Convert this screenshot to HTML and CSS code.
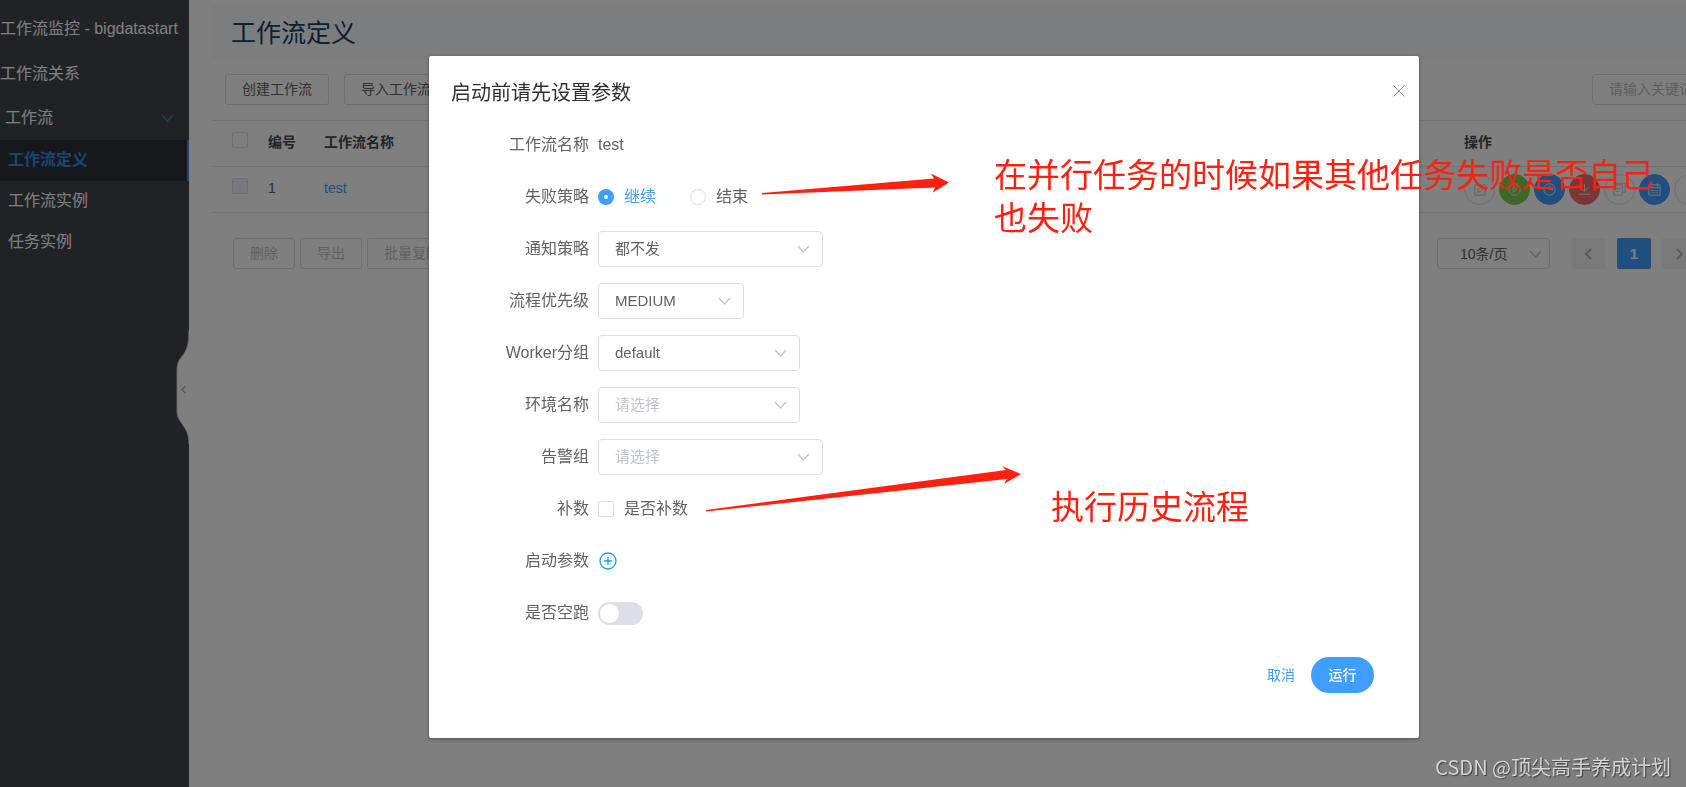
FILE: index.html
```html
<!DOCTYPE html>
<html lang="zh-CN">
<head>
<meta charset="utf-8">
<title>工作流定义</title>
<link rel="stylesheet" href="styles.css">
</head>
<body>
<svg class="defs" aria-hidden="true">
  <symbol id="chevron" viewBox="0 0 14 14"><path d="M1 4l5.500 6 5.500-6" fill="none" stroke="currentColor" stroke-width="1.3"/></symbol>
</svg>
<div class="page">
  <nav class="sidebar">
    <a class="nav-item nav-top" href="#">工作流监控 - bigdatastart</a>
    <a class="nav-item nav-top" href="#">工作流关系</a>
    <button class="nav-item nav-group" type="button">工作流<svg class="nav-chevron"><use href="#chevron"/></svg></button>
    <a class="nav-item nav-sub active" href="#">工作流定义</a>
    <a class="nav-item nav-sub" href="#">工作流实例</a>
    <a class="nav-item nav-sub" href="#">任务实例</a>
    <button class="collapse" type="button" aria-label="收起菜单">
      <svg viewBox="0 0 13 116"><path d="M13 1C13 32 1 23 1 42V82C1 95 13 96 13 115Z" fill="#fff"/><path d="M13 1C13 32 1 23 1 42V82C1 95 13 96 13 115" fill="none" stroke="#c6cad3"/><path d="M9.500 57L6 60.500L9.500 64" fill="none" stroke="#a6abc0" stroke-width="1.300"/></svg>
    </button>
  </nav>
  <main class="main">
    <div class="content">
      <h1 class="page-title">工作流定义</h1>
      <div class="toolbar">
        <button class="btn" type="button">创建工作流</button>
        <button class="btn" type="button">导入工作流</button>
        <input class="search" type="text" placeholder="请输入关键词" aria-label="关键词">
      </div>
      <table class="grid">
        <colgroup><col class="c-check"><col class="c-id"><col><col class="c-ops"></colgroup>
        <thead>
          <tr><th><input class="check" type="checkbox" aria-label="全选"></th><th>编号</th><th>工作流名称</th><th>操作</th></tr>
        </thead>
        <tbody>
          <tr>
            <td><input class="check" type="checkbox" disabled aria-label="选择 test"></td><td>1</td><td><a class="link" href="#">test</a></td>
            <td class="ops-cell">
              <div class="ops">
                <button class="op" type="button" aria-label="编辑"><svg viewBox="0 0 16 16"><path d="M10 3H3v11h11V7M6 11l1-3 6-6 2 2-6 6z"/></svg></button>
                <button class="op green" type="button" aria-label="运行"><svg viewBox="0 0 16 16"><circle cx="8" cy="8" r="6"/><path d="M6.500 5v6l4-3z"/></svg></button>
                <button class="op blue" type="button" aria-label="定时"><svg viewBox="0 0 16 16"><circle cx="8" cy="8" r="6"/><path d="M8 4v4h4"/></svg></button>
                <button class="op red" type="button" aria-label="下线"><svg viewBox="0 0 16 16"><path d="M8 2v8M4 6l4 4 4-4M2 13h12"/></svg></button>
                <button class="op" type="button" aria-label="复制"><svg viewBox="0 0 16 16"><path d="M2 3h9v11H2zM5 3V1.500h9V11h-3M4 7h5M4 10h4"/></svg></button>
                <button class="op blue" type="button" aria-label="定时管理"><svg viewBox="0 0 16 16"><path d="M2 3h12v11H2zM2 6h12M5 1v4M11 1v4M4 9h2M7 9h2M10 9h2M4 11.500h2M7 11.500h2M10 11.500h2"/></svg></button>
                <button class="op" type="button" aria-label="删除"><svg viewBox="0 0 16 16"><path d="M3 4h10M5 4v10h6V4"/></svg></button>
              </div>
            </td>
          </tr>
        </tbody>
      </table>
      <div class="bottom">
        <button class="btn" type="button" disabled>删除</button>
        <button class="btn" type="button" disabled>导出</button>
        <button class="btn" type="button" disabled>批量复制</button>
        <div class="pager">
          <span class="select-box page-size"><select aria-label="每页条数"><option>10条/页</option></select><svg><use href="#chevron"/></svg></span>
          <button class="page-btn" type="button" aria-label="上一页"><svg viewBox="0 0 14 14"><path d="M9 2L4 7l5 5"/></svg></button>
          <button class="page-btn current" type="button">1</button>
          <button class="page-btn" type="button" aria-label="下一页"><svg viewBox="0 0 14 14"><path d="M5 2l5 5-5 5"/></svg></button>
        </div>
      </div>
    </div>
  </main>
</div>

<div class="overlay">
  <section class="dialog" role="dialog" aria-labelledby="dialog-title">
    <header class="dialog-head">
      <h2 class="dialog-title" id="dialog-title">启动前请先设置参数</h2>
      <button class="close" type="button" aria-label="关闭"><svg viewBox="0 0 12 12"><path d="M.500 .500l11 11M11.500 .500l-11 11"/></svg></button>
    </header>
    <form class="form">
      <div class="row"><span class="label">工作流名称</span><span>test</span></div>
      <div class="row"><span class="label">失败策略</span>
        <label class="choice chosen"><input class="radio" type="radio" name="fail" checked>继续</label>
        <label class="choice"><input class="radio" type="radio" name="fail">结束</label>
      </div>
      <div class="row"><label class="label" for="notify">通知策略</label><span class="select-box wide"><select id="notify"><option>都不发</option></select><svg><use href="#chevron"/></svg></span></div>
      <div class="row"><label class="label" for="priority">流程优先级</label><span class="select-box narrow"><select id="priority"><option>MEDIUM</option></select><svg><use href="#chevron"/></svg></span></div>
      <div class="row"><label class="label" for="worker">Worker分组</label><span class="select-box medium"><select id="worker"><option>default</option></select><svg><use href="#chevron"/></svg></span></div>
      <div class="row"><label class="label" for="env">环境名称</label><span class="select-box medium"><select class="empty" id="env"><option>请选择</option></select><svg><use href="#chevron"/></svg></span></div>
      <div class="row"><label class="label" for="alarm">告警组</label><span class="select-box wide"><select class="empty" id="alarm"><option>请选择</option></select><svg><use href="#chevron"/></svg></span></div>
      <div class="row"><span class="label">补数</span><label class="choice"><input class="check" type="checkbox">是否补数</label></div>
      <div class="row"><span class="label">启动参数</span><button class="add" type="button" aria-label="添加参数"><svg viewBox="0 0 20 20"><circle cx="10" cy="10" r="8"/><path d="M6 10h8M10 6v8"/></svg></button></div>
      <div class="row"><label class="label" for="dry">是否空跑</label><input class="switch" id="dry" type="checkbox" role="switch"></div>
    </form>
    <footer class="dialog-foot">
      <button class="text-btn" type="button">取消</button>
      <button class="run" type="button">运行</button>
    </footer>
    <svg class="arrows" viewBox="0 0 620 500" aria-hidden="true">
      <path d="M333 137L505 122.500L502 117.500L520 126.500L504 136.500L506 131.500L333 138.500Z"/>
      <path d="M277 454L577 414L573 410L592 418L575 428L578 423L277 455.500Z"/>
    </svg>
    <p class="note note-fail">在并行任务的时候如果其他任务失败是否自己也失败</p>
    <p class="note note-history">执行历史流程</p>
  </section>
</div>
<div class="watermark">CSDN @顶尖高手养成计划</div>
</body>
</html>
```
FILE: styles.css
```css
* { box-sizing: border-box; }

body {
  margin: 0;
  overflow: hidden;
  font-family: "Liberation Sans", "Noto Sans CJK SC", sans-serif;
  font-size: 14px;
  line-height: 20px;
  color: #606266;
}

button, input, select { font: inherit; color: inherit; margin: 0; }
button { padding: 0; border: 0; background: none; }
a { text-decoration: none; }
h1, h2, p { margin: 0; font-weight: 400; }
.defs { position: absolute; width: 0; height: 0; }

.page { display: flex; height: 100vh; background: #fff; }

/* Sidebar */
.sidebar {
  position: relative;
  flex: none;
  width: 189px;
  padding-top: 6px;
  background: #43454b;
  font-size: 16px;
}
.nav-item {
  display: flex;
  align-items: center;
  width: 100%;
  height: 45px;
  color: #fff;
  white-space: nowrap;
}
.nav-group { height: 44px; padding: 0 14px 0 5px; justify-content: space-between; }
.nav-chevron { width: 14px; height: 14px; color: #2f7fd0; }
.nav-sub { height: 41px; padding: 0 0 2px 8px; }
.nav-sub.active { background: #2e3038; color: #348be6; font-weight: 700; border-right: 2px solid #348be6; }
.collapse { position: absolute; right: 0; top: 329px; width: 13px; height: 116px; }
.collapse svg { display: block; width: 13px; height: 116px; }

/* List page; it continues past the right edge of the window */
.main { flex: 1; min-width: 0; overflow: hidden; padding: 5px 0 0 23px; }
.content { width: calc(100% + 40px); }
.page-title {
  padding: 2px 19px 0;
  line-height: 52px;
  font-size: 25px;
  color: #1f3d5c;
  background: #f8fafd;
}
.toolbar { display: flex; gap: 15px; padding: 15px 0 15px 13px; }
.btn {
  height: 31px;
  padding: 0 16px 2px;
  border: 1px solid #dcdfe6;
  border-radius: 3px;
  background: #fff;
  white-space: nowrap;
}
.btn:disabled { color: #c0c4cc; }
.search {
  width: 134px;
  height: 31px;
  margin-left: auto;
  padding: 0 16px 2px;
  border: 1px solid #dcdfe6;
  border-radius: 4px;
}
.search::placeholder { color: #b8bbc2; }

.grid { width: 100%; table-layout: fixed; border-collapse: collapse; border-top: 1px solid #e4e7f2; }
.grid tr { height: 46px; border-bottom: 1px solid #e4e7f2; }
.grid th, .grid td { padding: 0 10px 3px; text-align: left; }
.grid .ops-cell { padding-bottom: 0; }
.grid th { color: #46494f; font-weight: 700; }
.grid .check { display: block; margin: 0 10px 4px; }
.c-check { width: 46px; }
.c-id { width: 56px; }
.c-ops { width: 272px; }
.link { color: #409eff; }
.ops { display: flex; gap: 4px; }
.op {
  display: grid;
  place-items: center;
  width: 31px;
  height: 31px;
  flex: none;
  border: 1px solid #dcdfe6;
  border-radius: 50%;
  color: #c0c4cc;
}
.op svg { width: 15px; height: 15px; fill: none; stroke: currentColor; }
.op.green { background: #82ce50; border-color: #82ce50; color: #e4f4da; }
.op.blue { background: #409eff; border-color: #409eff; color: #e4f1ff; }
.op.red { background: #f56c6c; border-color: #f56c6c; color: #fde8e8; }

.bottom { display: flex; gap: 5px; padding: 25px 30px 0 21px; }
.pager { display: flex; gap: 11px; margin-left: auto; }
.page-size { width: 113px; margin-right: 11px; }
.page-btn {
  display: grid;
  place-items: center;
  width: 34px;
  height: 31px;
  border-radius: 2px;
  background: #f4f4f5;
  font-size: 15px;
  font-weight: 700;
}
.page-btn svg { width: 14px; height: 14px; fill: none; stroke: #b4b7be; stroke-width: 2; }
.page-btn.current { background: #409eff; color: #fff; }

/* Shared controls */
.check {
  appearance: none;
  flex: none;
  width: 16px;
  height: 16px;
  border: 1px solid #dcdfe6;
  border-radius: 2px;
  background: #fff;
}
.check:disabled { background: #edf0fa; }
.radio {
  appearance: none;
  flex: none;
  width: 16px;
  height: 16px;
  border: 1px solid #dcdfe6;
  border-radius: 50%;
  background: #fff;
}
.radio:checked { border: 6px solid #409eff; }
.select-box { position: relative; display: block; }
.select-box select {
  appearance: none;
  display: block;
  width: 100%;
  height: 36px;
  padding: 0 16px;
  border: 1px solid #dcdfe6;
  border-radius: 4px;
  background: #fff;
  font-size: 15px;
}
.select-box .empty { color: #c0c4cc; }
.select-box svg {
  position: absolute;
  right: 12px;
  top: calc(50% - 7px);
  width: 14px;
  height: 14px;
  color: #c0c4cc;
  pointer-events: none;
}
.select-box.page-size select { height: 31px; padding-left: 22px; font-size: 14px; }
.select-box.page-size svg { right: 7px; }
.wide { width: 225px; }
.medium { width: 202px; }
.narrow { width: 146px; }

/* Dialog */
.overlay {
  position: fixed;
  inset: 0;
  padding: 56px 267px 0 429px;
  background: rgba(0, 0, 0, 0.5);
}
.dialog {
  position: relative;
  padding: 23px 45px 45px 22px;
  border-radius: 2px;
  background: #fff;
  box-shadow: 0 1px 4px rgba(0, 0, 0, 0.4);
}
.dialog-head { display: flex; justify-content: space-between; margin-right: -31px; }
.dialog-title { font-size: 20px; line-height: 28px; color: #303133; }
.close { width: 12px; height: 24px; }
.close svg { display: block; width: 12px; height: 12px; margin: auto; fill: none; stroke: #909399; }
.form { display: grid; gap: 16px; margin-top: 20px; font-size: 16px; }
.row { display: flex; align-items: center; height: 36px; }
.label { width: 138px; margin-right: 9px; text-align: right; flex: none; }
.choice { display: flex; align-items: center; gap: 10px; margin-right: 34px; }
.chosen { color: #409eff; }
.add { width: 20px; height: 20px; }
.add svg { display: block; width: 20px; height: 20px; fill: none; stroke: #1b9ee6; stroke-width: 1.3; }
.switch {
  appearance: none;
  display: flex;
  align-items: center;
  width: 45px;
  height: 23px;
  padding: 2px;
  border-radius: 12px;
  background: #dcdfe6;
}
.switch::before { content: ""; width: 19px; height: 19px; border-radius: 50%; background: #fff; }
.dialog-foot { display: flex; justify-content: flex-end; gap: 16px; margin-top: 26px; }
.text-btn { color: #409eff; }
.run { width: 63px; height: 36px; border-radius: 18px; background: #409eff; color: #fff; font-weight: 500; }

/* Annotations over the dialog */
.arrows { position: absolute; left: 0; top: 0; width: 620px; height: 500px; fill: #ff2010; pointer-events: none; }
.note { position: absolute; font-size: 33px; line-height: 43px; color: #ff2010; }
.note-fail { left: 565px; top: 98px; width: 670px; }
.note-history { left: 622px; top: 430px; }
.watermark {
  position: fixed;
  right: 15px;
  bottom: 5px;
  font-family: "Noto Sans CJK SC", sans-serif;
  font-size: 20px;
  line-height: 30px;
  color: #d4d4d4;
  text-shadow: 1px 1px 1px #404040;
}
```
